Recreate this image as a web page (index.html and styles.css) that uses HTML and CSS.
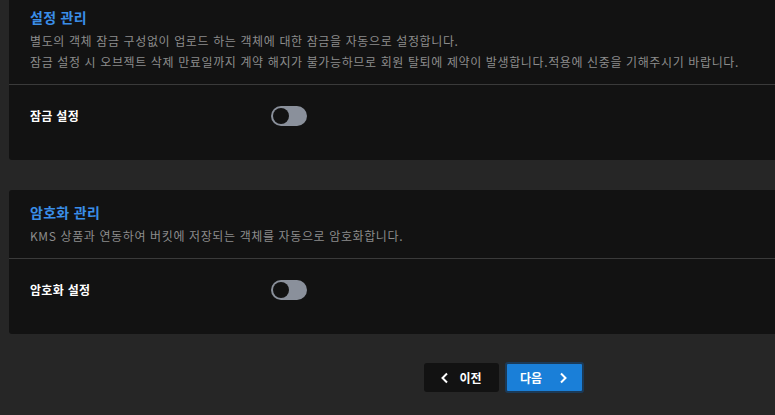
FILE: index.html
```html
<!DOCTYPE html>
<html lang="ko">
<head>
<meta charset="utf-8">
<link rel="stylesheet" href="styles.css">
</head>
<body>
<div class="page">
  <section class="card card-first">
    <div class="card-head">
      <h2 class="card-title">설정 관리</h2>
      <p class="card-desc">별도의 객체 잠금 구성없이 업로드 하는 객체에 대한 잠금을 자동으로 설정합니다.<br>잠금 설정 시 오브젝트 삭제 만료일까지 계약 해지가 불가능하므로 회원 탈퇴에 제약이 발생합니다.적용에 신중을 기해주시기 바랍니다.</p>
    </div>
    <div class="card-row">
      <span class="row-label">잠금 설정</span>
      <span class="toggle"><span class="knob"></span></span>
    </div>
  </section>
  <section class="card">
    <div class="card-head">
      <h2 class="card-title">암호화 관리</h2>
      <p class="card-desc">KMS 상품과 연동하여 버킷에 저장되는 객체를 자동으로 암호화합니다.</p>
    </div>
    <div class="card-row">
      <span class="row-label">암호화 설정</span>
      <span class="toggle"><span class="knob"></span></span>
    </div>
  </section>
  <div class="footer">
    <button class="btn btn-prev">
      <svg class="chev" width="10" height="12" viewBox="0 0 10 12"><path d="M7 1.5L2.5 6L7 10.5" fill="none" stroke="#fff" stroke-width="2"/></svg>
      <span>이전</span>
    </button>
    <button class="btn btn-next">
      <span>다음</span>
      <svg class="chev" width="10" height="12" viewBox="0 0 10 12"><path d="M3 1.5L7.5 6L3 10.5" fill="none" stroke="#fff" stroke-width="2"/></svg>
    </button>
  </div>
</div>
</body>
</html>
```

FILE: styles.css
```css
html, body {
  margin: 0;
  padding: 0;
  background: #262626;
  overflow: hidden;
}
body {
  font-family: "Noto Sans CJK KR", "Noto Sans", sans-serif;
  width: 775px;
  height: 415px;
}
.page {
  width: 989px;
  margin-left: 9px;
  margin-top: -5px;
}
.card {
  background: #121212;
  border-radius: 3px;
}
.card + .card {
  margin-top: 30px;
}
.card-head {
  padding: 12px 21px 12px 21px;
  border-bottom: 1px solid #3a3a3a;
}
.card-title {
  margin: 0;
  font-size: 14px;
  line-height: 20px;
  font-weight: 700;
  color: #3a8ee8;
  letter-spacing: 0.3px;
}
.card-desc {
  margin: 3px 0 0;
  font-size: 12px;
  line-height: 21px;
  color: #8c8c8c;
  letter-spacing: 0.62px;
}
.card-row {
  display: flex;
  align-items: center;
  padding: 21px 21px 34px;
}
.row-label {
  width: 241px;
  font-size: 12px;
  line-height: 20px;
  font-weight: 700;
  color: #ffffff;
  letter-spacing: 0.3px;
}
.toggle {
  width: 36px;
  height: 20px;
  border-radius: 10px;
  background: #8a909b;
  display: flex;
  align-items: center;
  padding-left: 2px;
  box-sizing: border-box;
}
.knob {
  width: 16px;
  height: 16px;
  border-radius: 50%;
  background: #121212;
}
.footer {
  display: flex;
  justify-content: center;
  gap: 6px;
  margin-top: 29px;
}
.btn {
  display: flex;
  align-items: center;
  justify-content: center;
  height: 29px;
  border: none;
  border-radius: 3px;
  font-family: inherit;
  font-size: 12px;
  font-weight: 700;
  color: #fff;
  padding: 0;
  gap: 9px;
}
.btn-prev {
  width: 75px;
  background: #121212;
}
.btn-next {
  width: 79px;
  height: 31px;
  margin-top: -1px;
  background: #1a7fd8;
  border: 2px solid #1b3a58;
  gap: 16px;
}
```
